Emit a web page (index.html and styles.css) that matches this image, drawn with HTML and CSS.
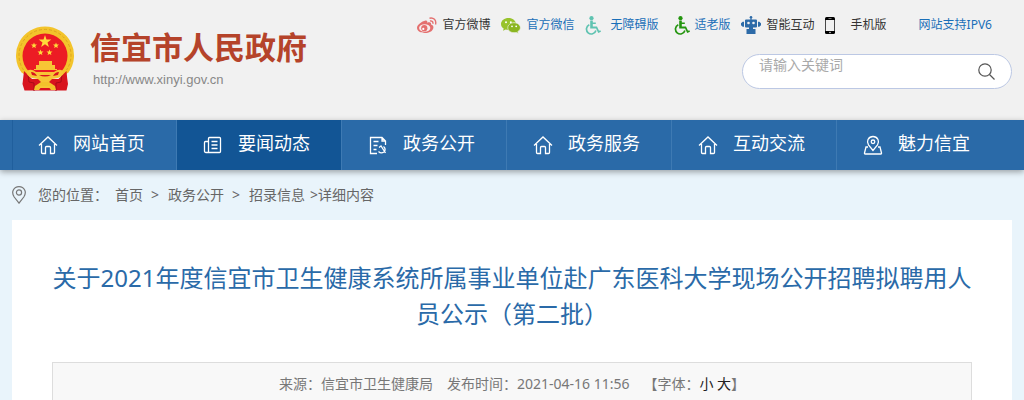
FILE: index.html
```html
<!DOCTYPE html>
<html lang="zh-CN">
<head>
<meta charset="utf-8">
<meta name="viewport" content="width=device-width, initial-scale=1">
<title>信宜市人民政府</title>
<link rel="stylesheet" href="styles.css">
</head>
<body>
<svg width="0" height="0" class="sprite" aria-hidden="true">
  <symbol id="home" viewBox="0 0 20 20"><path d="M1 10.500 10 2l9 8.500M3.500 9v8.500q0 1 1 1H7.500V12.500q0-1 1-1h3q1 0 1 1v6h3q1 0 1-1V9"/></symbol>
  <symbol id="wheel" viewBox="0 0 16 19"><circle cx="6.500" cy="2.200" r="2.100"/><path d="M5.200 4.500h2.600v2h3v1.600h-3v2.400h4.200l2 4.300 1.300-.6.7 1.500-2.800 1.300-2.100-4.500H5.200z"/><path d="M4.300 8.800A4.800 4.800 0 1 0 10.900 14.500" fill="none" stroke="currentColor" stroke-width="1.700"/></symbol>
</svg>
<header class="header">
  <div class="wrap header-row">
    <a class="brand" href="#">
      <svg class="emblem" viewBox="0 0 60 65" aria-hidden="true">
        <path d="M30 .5a29 29 0 0 0-23.500 46L12 50h36l5.500-3.500A29 29 0 0 0 30 .5z" fill="#f3c42b"/>
        <path d="M8.500 44a26 26 0 1 1 43 0" fill="none" stroke="#dda51f" stroke-width="1" stroke-dasharray="3 2"/>
        <circle cx="30" cy="30" r="22.500" fill="#ec1c24"/>
        <path d="m30 9 1.500 4.500h4.800l-3.800 2.900 1.400 4.600-3.900-2.800-3.900 2.800 1.400-4.600-3.800-2.900h4.800zM19 16.500l.8 2H22l-1.700 1.400.6 2.200-1.900-1.200-1.900 1.200.6-2.200-1.700-1.400h2.200zM41 16.500l.8 2h2.200l-1.700 1.400.6 2.200-1.900-1.200-1.900 1.200.6-2.200-1.700-1.400h2.200zM25.500 23.500l.8 2h2.200l-1.700 1.400.6 2.200-1.900-1.200-1.900 1.200.6-2.200-1.700-1.400h2.200zM34.500 23.500l.8 2h2.200l-1.700 1.400.6 2.200-1.900-1.200-1.900 1.200.6-2.200-1.700-1.400h2.200z" fill="#ffdb3a"/>
        <path d="M24 35h13v4h3v4h2v1H19v-1h2v-4h3z" fill="#f7c535"/>
        <path d="M9 45q-1 9-1.500 13l2 6.500h42l1.500-6.500q-1-6-1.500-13l-8 8H17z" fill="#d8141e"/>
        <path d="M13 49l1 7 5 1v8M47 49l-1 7-5 1v8" stroke="#a90d17" fill="none"/>
        <path d="M12 45q4-3 9 1h18q5-4 9-1 1 5-5 7l-6 1-3 3h-8l-3-3-6-1q-6-2-5-7z" fill="#f7c535"/>
        <path d="M16 46q4 0 6 4l-5-1zM44 46q-4 0-6 4l5-1zM24 49h12q-6 3-12 0z" fill="#d8141e"/>
        <path d="m19 64 1-4 6-4h8l6 4 1 4h-5l-3-4h-6l-3 4z" fill="#f3c22b"/>
        <path d="M25 60h10v2H25z" fill="#f7c535"/>
      </svg>
      <span class="brand-text">
        <strong class="brand-name">信宜市人民政府</strong>
        <span class="brand-url">http://www.xinyi.gov.cn</span>
      </span>
    </a>
    <div class="tools">
      <nav class="links" aria-label="快捷链接">
        <a class="dark" href="#"><svg viewBox="0 0 20 17" width="20" height="17" aria-hidden="true"><path fill="#e4706f" d="M8.500 3.500c1.400-.4 2.200.6 1.700 2.200 2.400-.9 4.300-.5 3.800 1.700 2 .6 2.800 2 2.300 3.800C15.500 14.300 12 16 8 16s-8-1.700-8-5.200C0 8 4.700 4.300 8.500 3.500z"/><ellipse cx="7.700" cy="11" rx="5.600" ry="3.800" fill="#f8eeee"/><circle cx="7.300" cy="11.200" r="3.100" fill="#e4706f"/><circle cx="6.300" cy="11.900" r="1.100" fill="#fff"/><path d="M12.500 1.200c4-1 7.200 2 6 6.300M13 4c2-.4 3.300.9 2.800 2.800" fill="none" stroke="#e4706f" stroke-width="1.400"/></svg>官方微博</a>
        <a href="#"><svg viewBox="0 0 20 17" width="20" height="17" aria-hidden="true"><path fill="#98c32c" d="M7.500 1C3.400 1 0 3.600 0 7c0 2 1.100 3.600 2.700 4.600L2 13.800l2.700-1.300q1.200.4 2.800.4C11.600 12.900 15 10.300 15 7s-3.400-6-7.500-6z"/><path fill="#8bb621" stroke="#f1f1f1" stroke-width=".7" d="M13 5.700c-3.600 0-6.200 2.300-6.200 5s2.600 5 6.200 5q1.200 0 2.200-.3l2.200 1.200-.6-2c1.600-.9 2.600-2.300 2.600-3.900 0-2.700-2.800-5-6.400-5z"/><g fill="#fff"><circle cx="5" cy="5.300" r="1"/><circle cx="9.800" cy="5.300" r="1"/><circle cx="11" cy="9.300" r=".9"/><circle cx="15.200" cy="9.300" r=".9"/></g></svg>官方微信</a>
        <a href="#"><svg class="teal" width="16" height="19" aria-hidden="true"><use href="#wheel"/></svg>无障碍版</a>
        <a class="end-icon" href="#"><svg class="green" width="16" height="19" aria-hidden="true"><use href="#wheel"/></svg>适老版</a>
        <a class="dark" href="#"><svg viewBox="0 0 20 18" width="20" height="18" aria-hidden="true"><g fill="#2d6ba8"><circle cx="10" cy="1.300" r="1.300"/><path d="M9.400 2h1.200v2H9.400zM5 3.500h10q1 0 1 1v6q0 1-1 1h-3v1.500h2.500V18h-9v-5H8v-1.500H5q-1 0-1-1v-6q0-1 1-1zM1.700 5.800h1.300v5H1.700L0 9.300V7.300zM18.300 5.800H17v5h1.300L20 9.300V7.300z"/></g><g fill="#f1f1f1"><circle cx="7.500" cy="7" r="1.300"/><circle cx="12.500" cy="7" r="1.300"/></g></svg>智能互动</a>
        <a class="dark" href="#"><svg viewBox="0 0 10 17" width="10" height="17" aria-hidden="true"><rect width="10" height="17" rx="1.500" fill="#000"/><path d="M.7 3h8.600v11H.7z" fill="#f1f1f1"/><path d="M3.500 1.500h3" stroke="#aaa" stroke-width=".7"/><circle cx="5" cy="15.500" r=".8" fill="#ddd"/></svg>手机版</a>
        <a class="plain" href="#">网站支持IPV6</a>
      </nav>
      <form class="search" role="search">
        <input type="text" aria-label="搜索关键词" placeholder="请输入关键词">
        <button type="button" aria-label="搜索"><svg viewBox="0 0 17 17" width="17" height="17" fill="none" stroke="#555" stroke-width="1.200" aria-hidden="true"><circle cx="7" cy="7" r="6.200"/><path d="m11.500 11.500 5 5"/></svg></button>
      </form>
    </div>
  </div>
</header>
<nav class="nav" aria-label="主导航">
  <div class="wrap nav-row">
    <a href="#"><svg aria-hidden="true"><use href="#home"/></svg>网站首页</a>
    <a class="active" href="#"><svg viewBox="0 0 20 20" aria-hidden="true"><path d="M6.500 2.500h10q1 0 1 1v13q0 1-1 1H3q-1.500 0-1.500-1.500V7.500q0-1 1-1H5.500M5.500 17.500V3.500q0-1 1-1M8.500 6.500h6M8.500 10h6M8.500 13.500h6"/></svg>要闻动态</a>
    <a href="#"><svg viewBox="0 0 20 20" aria-hidden="true"><path d="M9 18.500H2.500V2.500H14l3.500 3.500v4M14 2.500V6h3.500M5.500 6.500h5M5.500 10.500h4M5.500 14.500h3"/><path d="m11 12.500 2-1.500 4.500 7M10.500 16.500q2.500 2.500 5.500.5 2.500-3-.5-5.500"/></svg>政务公开</a>
    <a href="#"><svg aria-hidden="true"><use href="#home"/></svg>政务服务</a>
    <a href="#"><svg aria-hidden="true"><use href="#home"/></svg>互动交流</a>
    <a href="#"><svg viewBox="0 0 20 20" aria-hidden="true"><path d="M5 12H3L1.500 18q-.2 1 .8 1h15.400q1 0 .8-1L17 12h-2M10 15.500 5.500 9.800Q3.800 7 5 4.500 6.700 1.500 10 1.500t5 3Q16.200 7 14.500 9.800z"/><circle cx="10" cy="6.800" r="1.800"/></svg>魅力信宜</a>
  </div>
</nav>
<main class="wrap">
  <nav class="crumbs" aria-label="您的位置">
    <svg viewBox="0 0 14 18" width="14" height="18" fill="none" stroke="#777" stroke-width="1.200" aria-hidden="true"><path d="M7 17.200 2.200 11Q-.2 7.200 1.200 4.200 3 .7 7 .7t5.800 3.500q1.400 3-1 6.800z"/><circle cx="7" cy="6.500" r="2.600"/></svg>
    <span class="crumb-label">您的位置：</span>
    <a href="#">首页</a><span>&gt;</span><a href="#">政务公开</a><span>&gt;</span><a href="#">招录信息</a><span class="current">&gt;详细内容</span>
  </nav>
  <article class="article">
    <h1>关于2021年度信宜市卫生健康系统所属事业单位赴广东医科大学现场公开招聘拟聘用人员公示（第二批）</h1>
    <div class="meta">
      <span>来源：信宜市卫生健康局</span>
      <span>发布时间：2021-04-16 11:56</span>
      <span class="size">【字体：<button type="button">小</button> <button type="button">大</button>】</span>
    </div>
  </article>
</main>
</body>
</html>
```
FILE: styles.css
```css
* { box-sizing: border-box; }
body {
  margin: 0;
  background: #e9f4fb;
  color: #666;
  font: 14px/20px "Noto Sans", "Noto Sans CJK SC", sans-serif;
}
a { color: inherit; text-decoration: none; }
svg { flex: none; }
button { border: 0; padding: 0; background: none; font: inherit; cursor: pointer; }
.sprite { position: absolute; }
.wrap { max-width: 1000px; margin: 0 auto; }

.header { background: #f1f1f1; }
.header-row { display: flex; justify-content: space-between; min-height: 120px; }
.brand { display: flex; align-items: flex-start; gap: 15px; padding: 26px 0 0 3px; }
.emblem { width: 60px; height: 65px; }
.brand-text { display: flex; flex-direction: column; padding-top: 3px; }
.brand-name { color: #b5432a; font-size: 31px; line-height: 36px; }
.brand-url {
  padding: 5px 0 0 3px;
  color: #888;
  font-family: "Liberation Sans", sans-serif;
  font-size: 13px;
}

.tools { display: flex; flex-direction: column; align-items: flex-end; gap: 19px; padding-top: 15px; }
.links { display: flex; gap: 10px; padding-right: 20px; font-size: 12px; color: #1a6fb8; }
.links a { position: relative; display: flex; align-items: center; padding-left: 26px; white-space: nowrap; }
.links a svg { position: absolute; left: 0; }
.links .end-icon svg { left: 5px; }
.links .plain { padding-left: 22px; }
.links .dark { color: #333; }
.teal { color: #5fc3b1; fill: #5fc3b1; }
.green { color: #24950f; fill: #24950f; }

.search {
  display: flex;
  width: 270px;
  height: 35px;
  padding: 0 16px;
  border: 1px solid #bcc8e4;
  border-radius: 18px;
  background: #fff;
}
.search input {
  flex: 1;
  min-width: 0;
  height: 20px;
  padding: 0;
  border: 0;
  outline: 0;
  background: none;
  color: #666;
  font: inherit;
}
.search input::placeholder { color: #a9a9a9; }
.search button { display: flex; align-items: center; }

.nav { position: relative; background: #2a6aa8; box-shadow: 0 2px 6px rgba(0, 0, 0, .35); }
.nav-row { display: grid; grid-template-columns: repeat(6, minmax(0, 165px)); }
.nav-row a {
  display: flex;
  gap: 15px;
  height: 50px;
  padding-left: 26px;
  border-right: 1px solid #3e7ab3;
  color: #fff;
  font-size: 18px;
  line-height: 46px;
  white-space: nowrap;
}
.nav-row a:first-child { box-shadow: inset 1px 0 #205f9d; }
.nav-row a:last-child { border-right: 0; }
.nav-row .active { background: #125595; }
.nav-row svg {
  width: 20px;
  height: 20px;
  margin-top: 15px;
  fill: none;
  stroke: #fff;
  stroke-width: 1.3;
}

.crumbs { display: flex; align-items: center; height: 50px; }
.crumbs span { padding: 0 9px 0 8px; }
.crumbs .crumb-label { padding: 0 7px 0 12px; }
.crumbs .current { padding: 0 5px; }

.article { padding: 40px 40px 0; background: #fff; }
.article h1 {
  margin: 0 0 30px;
  color: #2a6aa8;
  font-size: 24px;
  font-weight: 400;
  line-height: 36px;
  text-align: center;
}
.meta {
  display: flex;
  justify-content: center;
  gap: 14px;
  padding: 11px 0 8px;
  border: 1px solid #ddd;
  border-bottom: 0;
  background: #f8f8f8;
  color: #777;
}
.meta button { color: #222; }
```
